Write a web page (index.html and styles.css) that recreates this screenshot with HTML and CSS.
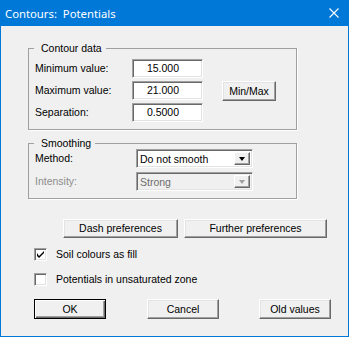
FILE: index.html
```html
<!DOCTYPE html>
<html>
<head>
  <title>Contours: Potentials</title>
  <link rel="stylesheet" href="styles.css">
</head>
<body>
  <div class="window">
    <div class="titlebar">
      <span class="title">Contours:  Potentials</span>
      <svg class="close" width="10" height="10" viewBox="0 0 10 10">
        <path d="M0.5 0.5 L9.5 9.5 M9.5 0.5 L0.5 9.5" stroke="#fff" stroke-width="1.1" fill="none"/>
      </svg>
    </div>

    <div class="client">
      <fieldset class="group">
        <legend>Contour data</legend>
        <div class="data-grid">
          <div class="label">Minimum value:</div>
          <div class="edit">15.000</div>
          <div></div>

          <div class="label">Maximum value:</div>
          <div class="edit">21.000</div>
          <div class="button minmax">Min/Max</div>

          <div class="label">Separation:</div>
          <div class="edit">0.5000</div>
          <div></div>
        </div>
      </fieldset>

      <fieldset class="group group-smooth">
        <legend>Smoothing</legend>
        <div class="smooth-grid">
          <div class="label">Method:</div>
          <div class="combo">
            <span class="combo-text">Do not smooth</span>
            <span class="combo-btn"><span class="tri"></span></span>
          </div>

          <div class="label disabled">Intensity:</div>
          <div class="combo combo-disabled">
            <span class="combo-text">Strong</span>
            <span class="combo-btn"><span class="tri"></span></span>
          </div>
        </div>
      </fieldset>

      <div class="pref-row">
        <div class="button dash">Dash preferences</div>
        <div class="button further">Further preferences</div>
      </div>

      <div class="check-row first">
        <span class="checkbox">
          <svg width="7" height="7" viewBox="0 0 7 7">
            <path d="M0 2 L0 5 L2 7 L7 2 L7 0 L2 5 Z" fill="#000"/>
          </svg>
        </span>
        <span class="check-label">Soil colours as fill</span>
      </div>
      <div class="check-row">
        <span class="checkbox"></span>
        <span class="check-label">Potentials in unsaturated zone</span>
      </div>

      <div class="bottom-row">
        <div class="button default">OK</div>
        <div class="button">Cancel</div>
        <div class="button">Old values</div>
      </div>
    </div>
  </div>
</body>
</html>
```

FILE: styles.css
```css
* {
  box-sizing: border-box;
}

body {
  margin: 0;
  font-family: "Liberation Sans", Arial, sans-serif;
  font-size: 10.5px;
  line-height: 13px;
  color: #000;
}

.window {
  width: 349px;
  height: 337px;
  border: 1px solid #0078d7;
  border-top: none;
  background: #f0f0f0;
  display: flex;
  flex-direction: column;
}

.titlebar {
  height: 26px;
  background: #0078d7;
  color: #fff;
  display: flex;
  align-items: center;
  justify-content: space-between;
  padding: 0 9px 0 4px;
  font-family: "Noto Sans", sans-serif;
  font-size: 11.3px;
}

.title {
  white-space: pre;
}

.client {
  flex: 1;
  padding-top: 16px;
}

/* group boxes */
.group {
  width: 269px;
  margin: 0 0 0 27px;
  padding: 5px 6px 7px 6px;
  border: 1px solid #a0a0a0;
  box-shadow: 1px 1px 0 #fff;
  min-width: 0;
}

.group legend {
  margin-left: -1px;
  padding: 0 4px 0 7px;
  line-height: 12px;
}

.group-smooth {
  margin-top: 7px;
  padding-top: 0;
}

.data-grid {
  display: grid;
  grid-template-columns: 97px 71px 73px;
  grid-auto-rows: 19px;
  row-gap: 3px;
  align-items: center;
}

.smooth-grid {
  display: grid;
  grid-template-columns: 101px 117px;
  grid-auto-rows: 19px;
  row-gap: 4px;
  align-items: center;
}

.label {
  white-space: nowrap;
}

.disabled {
  color: #8d8d8d;
}

/* sunken fields */
.edit,
.combo,
.checkbox {
  background: #fff;
  border: 1px solid;
  border-color: #a0a0a0 #fff #fff #a0a0a0;
  box-shadow: inset 1px 1px 0 #696969, inset -1px -1px 0 #e3e3e3;
}

.edit {
  height: 19px;
  text-align: right;
  padding-right: 23px;
  line-height: 17px;
}

.combo {
  height: 19px;
  display: flex;
  align-items: stretch;
  padding: 2px;
}

.combo-text {
  flex: 1;
  padding-left: 1px;
  line-height: 14px;
  white-space: nowrap;
  overflow: hidden;
}

.combo-btn {
  width: 16px;
  background: #f0f0f0;
  border: 1px solid;
  border-color: #fff #696969 #696969 #fff;
  box-shadow: inset -1px -1px 0 #a0a0a0;
  display: flex;
  align-items: center;
  justify-content: center;
}

.tri {
  width: 0;
  height: 0;
  border-left: 3.5px solid transparent;
  border-right: 3.5px solid transparent;
  border-top: 4px solid #000;
  margin-top: 1px;
}

.combo-disabled {
  background: #f0f0f0;
  color: #6d6d6d;
}

.combo-disabled .tri {
  border-top-color: #a0a0a0;
}

/* raised buttons */
.button {
  height: 20px;
  background: #f0f0f0;
  border: 1px solid;
  border-color: #fff #696969 #696969 #fff;
  box-shadow: inset -1px -1px 0 #a0a0a0, inset 1px 1px 0 #e3e3e3;
  text-align: center;
  line-height: 18px;
  white-space: nowrap;
  cursor: default;
  user-select: none;
}

.minmax {
  width: 54px;
  margin-left: 19px;
}

.button.default {
  border-color: #000;
  box-shadow: inset 1px 1px 0 #fff, inset -1px -1px 0 #696969, inset -2px -2px 0 #a0a0a0;
}

.pref-row {
  display: flex;
  gap: 6px;
  margin: 20px 0 0 62px;
}

.pref-row .button {
  height: 19px;
  line-height: 17px;
}

.dash {
  width: 115px;
}

.further {
  width: 143px;
}

/* check boxes */
.check-row {
  display: flex;
  align-items: center;
  gap: 9px;
  margin: 12px 0 0 33px;
  height: 13px;
}

.check-row.first {
  margin-top: 10px;
}

.checkbox {
  width: 13px;
  height: 13px;
  display: flex;
  align-items: center;
  justify-content: center;
}

.checkbox svg {
  display: block;
}

.bottom-row {
  display: flex;
  gap: 41px;
  margin: 13px 0 0 33px;
}

.bottom-row .button {
  width: 72px;
}

.bottom-row .button:last-child {
  margin-left: -1px;
}
```
